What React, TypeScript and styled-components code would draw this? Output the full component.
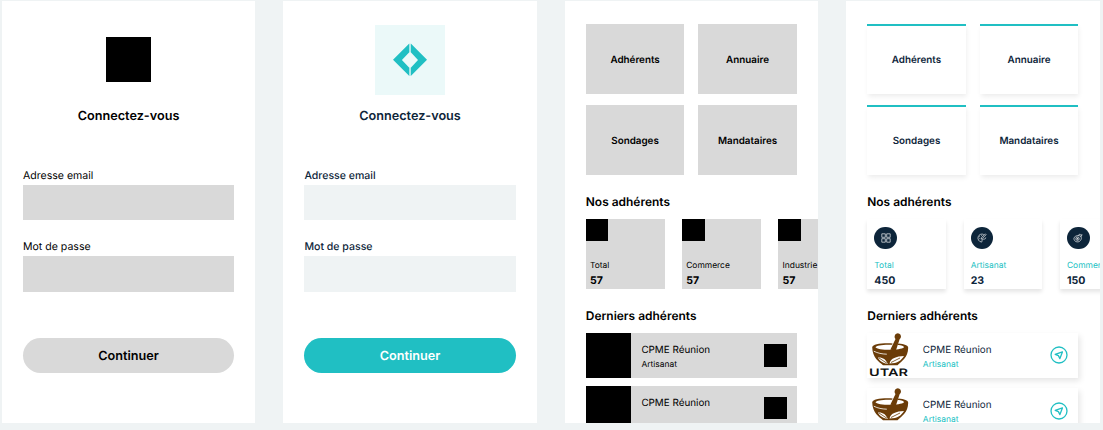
import React from "react";
import styled, { createGlobalStyle } from "styled-components";

const NAVY = "#0d253a";
const TEAL = "#20bfc3";
const GREY = "#d9d9d9";
const MIST = "#eff3f4";

const GlobalStyle = createGlobalStyle`
  * { box-sizing: border-box; }
  body { margin: 0; background: ${MIST}; overflow: hidden; }
`;

const Board = styled.main`
  display: flex;
  gap: 28.15px;
  height: 430px;
  padding: 1.2px 0 0 1.8px;
  font-family: Inter, "Liberation Sans", sans-serif;
  text-rendering: geometricPrecision;
  color: #000;
  background: ${MIST};
`;

const Phone = styled.section<{ $ink?: string }>`
  flex: none;
  width: 253.5px;
  height: 422.2px;
  overflow: hidden;
  background: #fff;
  color: ${(p) => p.$ink ?? "#000"};
  & + & { margin-left: -0.2px; }
`;

const LoginForm = styled(Phone)`
  display: flex;
  flex-direction: column;
  padding: 0 21.2px;
`;

const LogoArea = styled.div`
  display: flex;
  align-items: center;
  justify-content: center;
  height: 94px;
  padding-top: 23px;
`;

const LogoPlaceholder = styled.div`
  width: 45px;
  height: 45px;
  background: #000;
`;

const LogoTile = styled.div`
  width: 70px;
  height: 70px;
  background: #ebf9f9;
  svg { display: block; }
`;

const LoginTitle = styled.h1`
  margin: 12.8px 0 41.2px;
  font-size: 12.66px;
  line-height: 18px;
  font-weight: 600;
  text-align: center;
`;

const Field = styled.label<{ $medium?: boolean }>`
  display: block;
  margin-bottom: 18px;
  font-size: 10.55px;
  line-height: 17px;
  font-weight: ${(p) => (p.$medium ? 500 : 400)};
`;

const Input = styled.input<{ $fill: string }>`
  display: block;
  width: 100%;
  height: 35.2px;
  margin-top: 1px;
  padding: 0 8px;
  border: 0;
  border-radius: 0;
  background: ${(p) => p.$fill};
`;

const Submit = styled.button<{ $fill: string; $text: string }>`
  height: 35.2px;
  margin-top: 28px;
  padding: 3px 0 0;
  border: 0;
  border-radius: 18px;
  background: ${(p) => p.$fill};
  color: ${(p) => p.$text};
  font: 600 12.66px/18px Inter, "Liberation Sans", sans-serif;
  text-rendering: inherit;
`;

const Home = styled(Phone)`
  padding: 22.8px 0 0 21.1px;
`;

const Tiles = styled.nav`
  display: grid;
  grid-template-columns: 98.5px 98.5px;
  grid-auto-rows: 70.3px;
  gap: 10.7px 14px;
`;

const Tile = styled.a<{ $accent?: boolean }>`
  display: flex;
  align-items: center;
  justify-content: center;
  padding-top: 2px;
  font-size: 9.85px;
  font-weight: 600;
  background: ${(p) => (p.$accent ? `linear-gradient(${TEAL} 2px, #fff 2px)` : GREY)};
  box-shadow: ${(p) => (p.$accent ? "1.4px 2.8px 5px rgba(0,0,0,.08)" : "none")};
`;

const Heading = styled.h2`
  margin: 0;
  color: #000;
  font-size: 11.96px;
  line-height: 18px;
  font-weight: 600;
`;

const StatsSection = styled.section`
  padding-top: 17.6px;
`;

const Stats = styled.div`
  display: flex;
  gap: 17.5px;
  padding-top: 7.9px;
`;

const Stat = styled.article<{ $accent?: boolean }>`
  display: flex;
  flex-direction: column;
  flex: none;
  width: 78.8px;
  height: 70.4px;
  padding: ${(p) => (p.$accent ? "8.2px 0 0 7.1px" : "0")};
  background: ${(p) => (p.$accent ? "#fff" : GREY)};
  box-shadow: ${(p) => (p.$accent ? "0 2.8px 4px rgba(0,0,0,.1)" : "none")};
`;

const StatText = styled.div<{ $accent?: boolean }>`
  padding: ${(p) => (p.$accent ? "9.1px 0 0" : "17.3px 0 0 4.1px")};
`;

const StatLabel = styled.div<{ $accent?: boolean }>`
  font-size: 8.44px;
  line-height: 14px;
  color: ${(p) => (p.$accent ? TEAL : "inherit")};
`;

const StatValue = styled.div`
  font-size: 10.55px;
  line-height: 16.6px;
  font-weight: 700;
`;

const Square = styled.div`
  flex: none;
  width: 22.6px;
  height: 22.6px;
  background: #000;
`;

const Badge = styled.div`
  display: flex;
  align-items: center;
  justify-content: center;
  width: 22.6px;
  height: 22.6px;
  border-radius: 50%;
  background: ${NAVY};
`;

const LatestSection = styled.section`
  padding-top: 17.7px;
`;

const Rows = styled.div<{ $gap: number }>`
  display: flex;
  flex-direction: column;
  gap: ${(p) => p.$gap}px;
  width: 211px;
  padding-top: 8px;
`;

const Row = styled.article<{ $accent?: boolean }>`
  display: flex;
  align-items: center;
  height: 45px;
  padding-right: ${(p) => (p.$accent ? "10.6px" : "9.8px")};
  background: ${(p) => (p.$accent ? "#fff" : GREY)};
  box-shadow: ${(p) => (p.$accent ? "2px 2.8px 6px rgba(0,0,0,.1)" : "none")};
  > svg { flex: none; }
`;

const RowPicture = styled.div`
  flex: none;
  width: 45px;
  height: 45px;
  background: #000;
`;

const RowText = styled.div`
  flex: 1;
  align-self: flex-start;
  padding: 8.9px 0 0 10.6px;
`;

const RowName = styled.div`
  font-size: 9.85px;
  line-height: 16px;
`;

const RowTrade = styled.div<{ $accent?: boolean }>`
  font-size: 8.44px;
  line-height: 15.4px;
  color: ${(p) => (p.$accent ? TEAL : "inherit")};
`;

const DiamondLogo = () => (
  <svg width="70" height="70" viewBox="0 0 70 70" fill={TEAL}>
    <path d="M34.3 18.6 18 34.7 34.3 51V42.7L26.9 34.9 34.3 27.3Z" />
    <path d="M35.8 18.6 52 34.7 35.8 51V42.7L43 34.9 35.8 27.3Z" />
    <path d="M35 19v8.200M35 42.500V51" stroke="#8edfe1" strokeWidth=".6" />
  </svg>
);

const MortarLogo = ({ caption }: { caption?: string }) => (
  <svg width="45" height="45" viewBox="0 0 45 45">
    <g fill="#6b3c08">
      <path d="M27.600 3.400a3.200 3.200 0 1 1 5 2.800L28.900 17.500 23.300 16.800 28.500 6A3.200 3.200 0 0 1 27.600 3.400Z" />
      <path d="M5.200 14.200C6 11.200 13 10 25.600 10.400L25.100 11.800C15 11.500 9.500 12.500 8.500 14.200c1 3 24 4 28.500.1.300-1.100-2.700-2-6.200-2.300l.5-1.400c6.200.5 9.800 1.800 9.900 4.100C41 25 34.500 28 30.500 32.200H16C12 28.500 5.500 25 5.200 14.200Z" />
    </g>
    <path
      d="M11 24.500C15 24 19 26 20.800 31c-4-.5-8-2.500-9.800-6.500ZM22.500 30.500C24 25 29 23.500 37 23c-2.500 4-6 7.500-14.500 7.500Z"
      fill="#fff"
    />
    <path d="M6.800 18.200c4 2 8 2.800 13 3" fill="none" stroke="#fff" strokeWidth=".8" />
    <path d="m12 25 8 5.300M24 29.500l9-4.500" stroke="#6b3c08" strokeWidth=".8" />
    {caption && (
      <text
        x="2"
        y="43"
        fontFamily="Inter, sans-serif"
        fontSize="10.300"
        fontWeight="600"
        fill="#111"
        textLength="39"
        lengthAdjust="spacingAndGlyphs"
      >
        {caption}
      </text>
    )}
  </svg>
);

const SendIcon = () => (
  <svg width="18" height="18" viewBox="0 0 18 18" fill="none" stroke={TEAL}>
    <circle cx="9" cy="9" r="8" strokeWidth="1.300" />
    <path d="M12.400 5.900 5.200 8.300l3.200 1.300 1.500 3Z" strokeWidth="1.300" strokeLinejoin="round" />
  </svg>
);

const GridIcon = () => (
  <svg width="10" height="10" viewBox="0 0 10 10" fill="none" stroke="#fff" strokeWidth=".65">
    <path d="M.8.8h3.500v3.500H.8ZM5.700.8h3.500v3.500H5.700ZM.8 5.700h3.500v3.500H.8ZM5.700 5.700h3.500v3.500H5.700Z" />
  </svg>
);

const CraftIcon = () => (
  <svg width="10" height="10" viewBox="0 0 10 10" fill="none" stroke="#fff" strokeWidth=".65">
    <path d="M6.800 1.500A4 4 0 1 0 4.300 9c1.400 0 .3-1.700 1.200-2.500S8.700 6.900 8.700 4.500M4 6.200l.4-1.500L8.300.9l.8.8-3.800 3.900Z" />
    <path d="M2.300 3.600h.8M4.300 2.500h.8M2.200 5.600h.6" />
  </svg>
);

const TradeIcon = () => (
  <svg width="10" height="10" viewBox="0 0 10 10" fill="none" stroke="#fff" strokeWidth=".65">
    <path d="M1.100 4.600C2.800 2.300 6 2 7.600 3.300c1.800 1.800.1 5.400-2.700 5.600C2.200 9.100.3 6.700 1.100 4.600ZM5.400 2.500 6.700.9l1 1.300 1.400-.5-1.200 2.200" />
    <circle cx="4.500" cy="5.700" r="1.700" />
    <path d="M4.500 4.800v1.800M3.600 5.700h1.800" />
  </svg>
);

const Login = ({ branded = false }: { branded?: boolean }) => (
  <LoginForm $ink={branded ? NAVY : undefined}>
    <LogoArea>
      {branded ? <LogoTile><DiamondLogo /></LogoTile> : <LogoPlaceholder />}
    </LogoArea>
    <LoginTitle>Connectez-vous</LoginTitle>
    {["Adresse email", "Mot de passe"].map((label) => (
      <Field key={label} $medium={branded}>
        {label}
        <Input $fill={branded ? MIST : GREY} />
      </Field>
    ))}
    <Submit $fill={branded ? TEAL : GREY} $text={branded ? "#fff" : "#000"}>
      Continuer
    </Submit>
  </LoginForm>
);

type StatItem = { label: string; value: number; icon?: React.ReactNode };

const wireStats: StatItem[] = [
  { label: "Total", value: 57 },
  { label: "Commerce", value: 57 },
  { label: "Industrie", value: 57 },
];

const brandStats: StatItem[] = [
  { label: "Total", value: 450, icon: <GridIcon /> },
  { label: "Artisanat", value: 23, icon: <CraftIcon /> },
  { label: "Commerce", value: 150, icon: <TradeIcon /> },
];

const Dashboard = ({ branded = false }: { branded?: boolean }) => (
  <Home $ink={branded ? NAVY : undefined}>
    <Tiles>
      {["Adhérents", "Annuaire", "Sondages", "Mandataires"].map((name) => (
        <Tile key={name} $accent={branded}>{name}</Tile>
      ))}
    </Tiles>
    <StatsSection>
      <Heading>Nos adhérents</Heading>
      <Stats>
        {(branded ? brandStats : wireStats).map((s) => (
          <Stat key={s.label} $accent={branded}>
            {branded ? <Badge>{s.icon}</Badge> : <Square />}
            <StatText $accent={branded}>
              <StatLabel $accent={branded}>{s.label}</StatLabel>
              <StatValue>{s.value}</StatValue>
            </StatText>
          </Stat>
        ))}
      </Stats>
    </StatsSection>
    <LatestSection>
      <Heading>Derniers adhérents</Heading>
      <Rows $gap={branded ? 10.6 : 7.8}>
        {[0, 1].map((i) => (
          <Row key={i} $accent={branded}>
            {branded ? <MortarLogo caption={i === 0 ? "UTAR" : undefined} /> : <RowPicture />}
            <RowText>
              <RowName>CPME Réunion</RowName>
              {(branded || i === 0) && <RowTrade $accent={branded}>Artisanat</RowTrade>}
            </RowText>
            {branded ? <SendIcon /> : <Square />}
          </Row>
        ))}
      </Rows>
    </LatestSection>
  </Home>
);

export default function App() {
  return (
    <>
      <GlobalStyle />
      <Board>
        <Login />
        <Login branded />
        <Dashboard />
        <Dashboard branded />
      </Board>
    </>
  );
}
